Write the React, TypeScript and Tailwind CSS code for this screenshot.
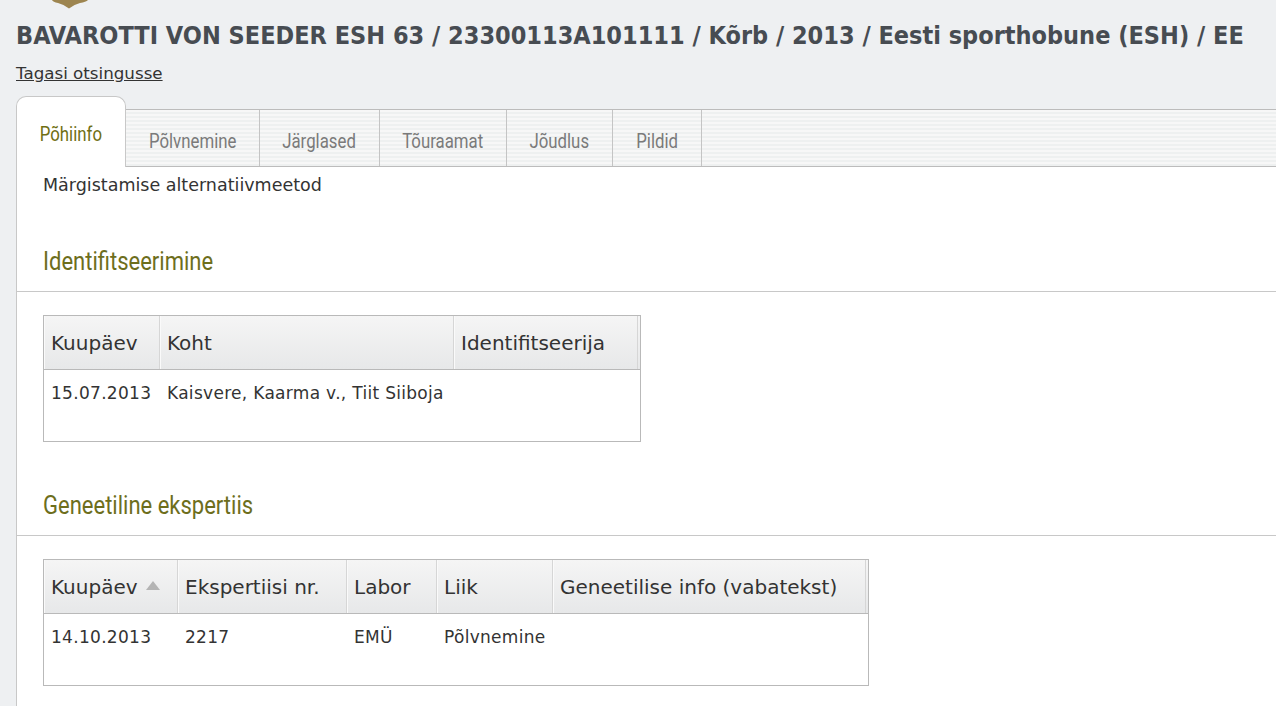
import React from "react";

const body = "font-['DejaVu_Sans',sans-serif]";
const narrow = "font-['Roboto',sans-serif]";

function Logo() {
  return (
    <svg width="40" height="9" viewBox="0 0 40 9" className="block ml-[50px]">
      <path d="M2 0 H38 Q36 2 30 3 Q24 4.5 19 8.5 Q14 4.5 8 3 Q3 2 2 0 Z" fill="#9d8550" />
    </svg>
  );
}

const tabs = [
  { label: "Põlvnemine", w: "w-[134px]" },
  { label: "Järglased", w: "w-[120px]" },
  { label: "Tõuraamat", w: "w-[127px]" },
  { label: "Jõudlus", w: "w-[106px]" },
  { label: "Pildid", w: "w-[89px]" },
];

function Tabs() {
  return (
    <div className="flex items-end h-[71px] ml-[16px]">
      <div className="w-[110px] h-[71px] bg-white border border-b-0 border-[#c8c8c8] rounded-t-[10px] flex justify-center pt-[25px]">
        <span className={`${narrow} inline-block scale-x-[0.8] text-[21px] leading-[24px] text-[#6f6f14]`}>Põhiinfo</span>
      </div>
      <div className="flex-1 h-[58px] flex border-t border-b border-[#bcbcbc] bg-[repeating-linear-gradient(180deg,#f7f7f7_0px,#f7f7f7_2px,#eef0f0_2px,#eef0f0_4px)]">
        {tabs.map((t) => (
          <div key={t.label} className={`${t.w} h-full border-r border-[#c4c4c4] flex items-center justify-center pt-[6px]`}>
            <span className={`${narrow} inline-block scale-x-[0.8] text-[21px] leading-[24px] text-[#7a7a7a]`}>{t.label}</span>
          </div>
        ))}
      </div>
    </div>
  );
}

type Col = { label: string; w: string; sort?: boolean };

function DataTable({ cols, row, width }: { cols: Col[]; row: string[]; width: string }) {
  return (
    <div className={`ml-[26px] ${width} border border-[#b9b9b9] bg-white`}>
      <div className="flex h-[54px] border-b border-[#b9b9b9] bg-[linear-gradient(180deg,#f5f5f5,#e7e8e9)]">
        {cols.map((c, i) => (
          <div key={i} className={`${c.w} h-full flex items-center pl-[7px] border-r border-[#d6d6d6] shadow-[inset_1px_0_0_#fafafa]`}>
            <span className={`${body} text-[20px] text-[#333] leading-[24px] whitespace-nowrap`}>{c.label}</span>
            {c.sort && (
              <svg width="14" height="9" viewBox="0 0 14 9" className="ml-[8px] mt-[-2px]">
                <path d="M7 0 L14 9 H0 Z" fill="#b4b4b4" />
              </svg>
            )}
          </div>
        ))}
        <div className="flex-1 h-full" />
      </div>
      <div className="flex h-[71px] pt-[11px]">
        {cols.map((c, i) => (
          <div key={i} className={`${c.w} pl-[7px]`}>
            <span className={`${body} text-[17px] tracking-[0.3px] text-[#333] leading-[20px] whitespace-nowrap`}>{row[i] ?? ""}</span>
          </div>
        ))}
      </div>
    </div>
  );
}

export default function App() {
  return (
    <div className="w-full min-h-[706px] bg-[#eef0f2] overflow-hidden">
      <Logo />
      <h1 className={`mt-[12px] pl-[16px] font-['DejaVu_Sans_Condensed','DejaVu_Sans',sans-serif] [font-stretch:condensed] font-bold text-[25px] leading-[30px] text-[#474c52] whitespace-nowrap`}>
        BAVAROTTI VON SEEDER ESH 63 / 23300113A101111 / Kõrb / 2013 / Eesti sporthobune (ESH) / EE
      </h1>
      <div className="mt-[10px] pl-[16px] h-[20px]">
        <a className={`${body} text-[16.7px] leading-[20px] text-[#333] underline`}>Tagasi otsingusse</a>
      </div>
      <div className="mt-[15px]">
        <Tabs />
      </div>
      <div className="ml-[16px] bg-white border-l border-[#c8c8c8] pb-[40px]">
        <div className={`pl-[26px] pt-[7px] ${body} text-[17.5px] leading-[22px] text-[#333]`}>Märgistamise alternatiivmeetod</div>
        <h2 className={`pl-[26px] mt-[51px] ${narrow} text-[25px] leading-[30px] text-[#6d6e1c]`}>
          <span className="inline-block origin-left scale-x-[0.88]">Identifitseerimine</span>
        </h2>
        <div className="mt-[14px] h-px bg-[#c8c8c8]" />
        <div className="mt-[23px]">
          <DataTable
            width="w-[598px]"
            cols={[
              { label: "Kuupäev", w: "w-[116px]" },
              { label: "Koht", w: "w-[294px]" },
              { label: "Identifitseerija", w: "w-[184px]" },
            ]}
            row={["15.07.2013", "Kaisvere, Kaarma v., Tiit Siiboja", ""]}
          />
        </div>
        <h2 className={`pl-[26px] mt-[49px] ${narrow} text-[25px] leading-[30px] text-[#6d6e1c]`}>
          <span className="inline-block origin-left scale-x-[0.88]">Geneetiline ekspertiis</span>
        </h2>
        <div className="mt-[14px] h-px bg-[#c8c8c8]" />
        <div className="mt-[23px]">
          <DataTable
            width="w-[826px]"
            cols={[
              { label: "Kuupäev", w: "w-[134px]", sort: true },
              { label: "Ekspertiisi nr.", w: "w-[169px]" },
              { label: "Labor", w: "w-[90px]" },
              { label: "Liik", w: "w-[116px]" },
              { label: "Geneetilise info (vabatekst)", w: "w-[313px]" },
            ]}
            row={["14.10.2013", "2217", "EMÜ", "Põlvnemine", ""]}
          />
        </div>
      </div>
    </div>
  );
}
